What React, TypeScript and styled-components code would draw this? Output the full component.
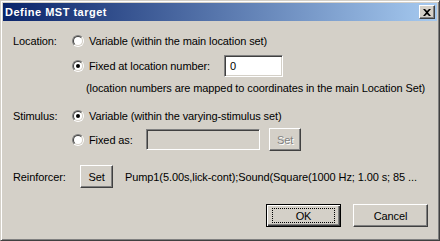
import React from 'react';
import styled, { createGlobalStyle } from 'styled-components';

const GlobalStyle = createGlobalStyle`
  html, body {
    margin: 0;
    padding: 0;
    background: #d4d0c8;
  }
  body {
    font-family: "Liberation Sans", Arial, sans-serif;
    font-size: 11px;
    letter-spacing: -0.1px;
    color: #000;
  }
`;

const Window = styled.div`
  box-sizing: border-box;
  width: 440px;
  height: 241px;
  background: #d4d0c8;
  border-top: 1px solid #d4d0c8;
  border-left: 1px solid #d4d0c8;
  border-right: 1px solid #404040;
  border-bottom: 1px solid #404040;
  box-shadow: inset 1px 1px 0 #fff, inset -1px -1px 0 #808080;
  padding: 2px;
  display: flex;
  flex-direction: column;
`;

const TitleBar = styled.div`
  height: 18px;
  display: flex;
  align-items: center;
  justify-content: space-between;
  padding: 0 2px;
  background: linear-gradient(to right, #0a246a, #a6caf0);
`;

const TitleText = styled.span`
  color: #fff;
  font-weight: bold;
  font-size: 11px;
  letter-spacing: 0.5px;
`;

const CloseButton = styled.div`
  box-sizing: border-box;
  width: 16px;
  height: 14px;
  background: #d4d0c8;
  border-top: 1px solid #fff;
  border-left: 1px solid #fff;
  border-right: 1px solid #404040;
  border-bottom: 1px solid #404040;
  box-shadow: inset -1px -1px 0 #808080;
  display: flex;
  align-items: center;
  justify-content: center;
`;

const Body = styled.div`
  display: flex;
  flex-direction: column;
  padding: 0 0 0 10px;
`;

const Row = styled.div<{ $top: number; $h: number }>`
  display: flex;
  align-items: center;
  margin-top: ${p => p.$top}px;
  height: ${p => p.$h}px;
`;

const FieldLabel = styled.span`
  width: 59px;
  flex: none;
`;

const Option = styled.label<{ $w?: number }>`
  display: flex;
  align-items: center;
  gap: 5px;
  flex: none;
  width: ${p => (p.$w ? `${p.$w}px` : 'auto')};
`;

const RadioOuter = styled.span`
  box-sizing: border-box;
  width: 12px;
  height: 12px;
  border-radius: 50%;
  border: 1px solid;
  border-color: #808080 #fff #fff #808080;
  display: flex;
`;

const RadioInner = styled.span`
  box-sizing: border-box;
  width: 10px;
  height: 10px;
  border-radius: 50%;
  border: 1px solid;
  border-color: #404040 #d4d0c8 #d4d0c8 #404040;
  background: #fff;
  display: flex;
  align-items: center;
  justify-content: center;
`;

const Dot = styled.span`
  width: 4px;
  height: 4px;
  border-radius: 50%;
  background: #000;
`;

const TextBox = styled.div<{ $w: number; $h: number; $disabled?: boolean }>`
  box-sizing: border-box;
  width: ${p => p.$w}px;
  height: ${p => p.$h}px;
  border: 1px solid;
  border-color: #808080 #fff #fff #808080;
  box-shadow: inset 1px 1px 0 #404040, inset -1px -1px 0 #d4d0c8;
  background: ${p => (p.$disabled ? '#d4d0c8' : '#fff')};
  display: flex;
  align-items: center;
  padding-left: 5px;
  flex: none;
`;

const Button = styled.div<{ $w: number; $disabled?: boolean; $default?: boolean; $ml?: number }>`
  box-sizing: border-box;
  width: ${p => p.$w}px;
  height: 23px;
  margin-left: ${p => p.$ml ?? 0}px;
  flex: none;
  background: #d4d0c8;
  display: flex;
  align-items: center;
  justify-content: center;
  border: 1px solid;
  border-color: ${p => (p.$default ? '#000' : '#fff #404040 #404040 #fff')};
  box-shadow: ${p =>
    p.$default
      ? 'inset 1px 1px 0 #fff, inset -1px -1px 0 #404040, inset -2px -2px 0 #808080'
      : 'inset -1px -1px 0 #808080'};
  color: ${p => (p.$disabled ? '#808080' : '#000')};
  text-shadow: ${p => (p.$disabled ? '1px 1px 0 #fff' : 'none')};
`;

const FocusRing = styled.span`
  box-sizing: border-box;
  width: 63px;
  height: 15px;
  border: 1px dotted #000;
  display: flex;
  align-items: center;
  justify-content: center;
`;

const Note = styled.span`
  margin-left: 73px;
`;

const Summary = styled.span`
  margin-left: 12px;
  white-space: nowrap;
`;

const Footer = styled.div`
  display: flex;
  justify-content: flex-end;
  gap: 12px;
  margin-top: 16px;
  padding-right: 9px;
`;

const Radio: React.FC<{ checked?: boolean }> = ({ checked }) => (
  <RadioOuter>
    <RadioInner>{checked && <Dot />}</RadioInner>
  </RadioOuter>
);

export default function App() {
  return (
    <>
      <GlobalStyle />
      <Window>
        <TitleBar>
          <TitleText>Define MST target</TitleText>
          <CloseButton>
            <svg width="8" height="7" viewBox="0 0 8 7">
              <path d="M0 0h2l2 2 2-2h2L5 3.5 8 7H6L4 5 2 7H0l3-3.5z" fill="#000" />
            </svg>
          </CloseButton>
        </TitleBar>
        <Body>
          <Row $top={10} $h={20}>
            <FieldLabel>Location:</FieldLabel>
            <Option>
              <Radio />
              Variable (within the main location set)
            </Option>
          </Row>
          <Row $top={4} $h={22}>
            <FieldLabel />
            <Option $w={152}>
              <Radio checked />
              Fixed at location number:
            </Option>
            <TextBox $w={59} $h={22}>0</TextBox>
          </Row>
          <Row $top={4} $h={14}>
            <Note>(location numbers are mapped to coordinates in the main Location Set)</Note>
          </Row>
          <Row $top={11} $h={20}>
            <FieldLabel>Stimulus:</FieldLabel>
            <Option>
              <Radio checked />
              Variable (within the varying-stimulus set)
            </Option>
          </Row>
          <Row $top={2} $h={23}>
            <FieldLabel />
            <Option $w={74}>
              <Radio />
              Fixed as:
            </Option>
            <TextBox $w={114} $h={21} $disabled />
            <Button $w={32} $ml={9} $disabled>Set</Button>
          </Row>
          <Row $top={14} $h={23}>
            <FieldLabel>Reinforcer:</FieldLabel>
            <Button $w={33} $ml={8}>Set</Button>
            <Summary>Pump1(5.00s,lick-cont);Sound(Square(1000 Hz; 1.00 s; 85 ...</Summary>
          </Row>
          <Footer>
            <Button $w={75} $default>
              <FocusRing>OK</FocusRing>
            </Button>
            <Button $w={75}>Cancel</Button>
          </Footer>
        </Body>
      </Window>
    </>
  );
}
